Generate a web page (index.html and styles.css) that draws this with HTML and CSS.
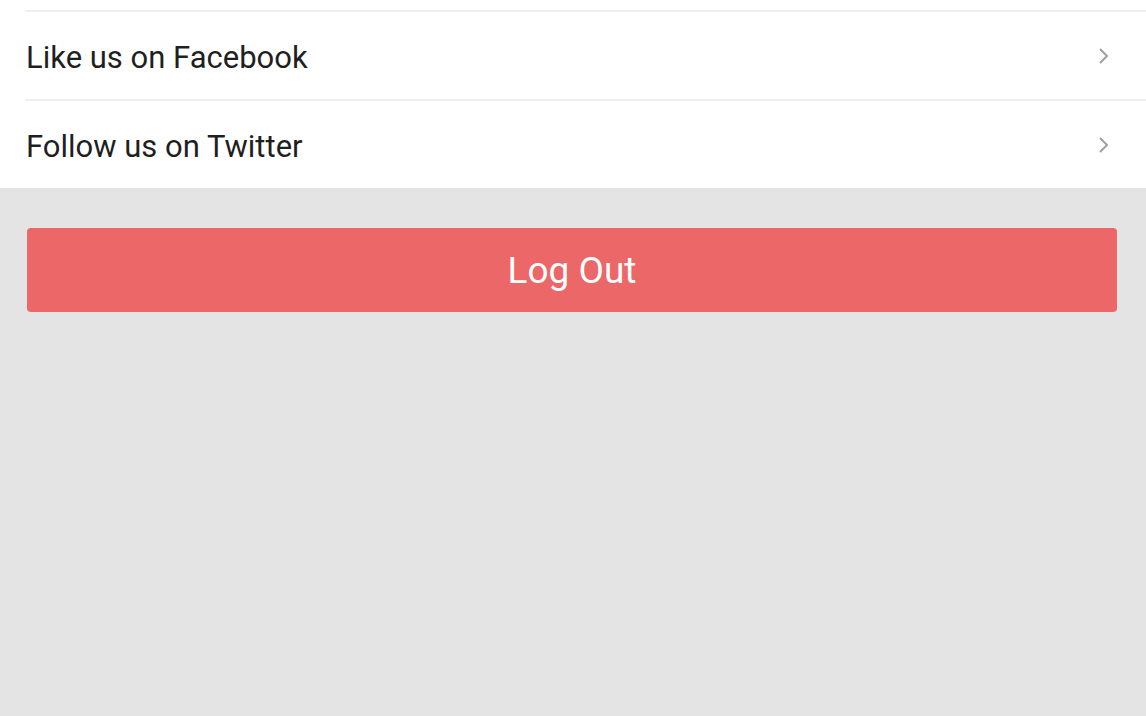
FILE: index.html
```html
<!doctype html>
<html lang="en">
<head>
    <meta charset="utf-8">
    <title>Settings</title>
    <link rel="stylesheet" href="styles.css">
</head>
<body>
    <div class="menu">
        <div class="menu-stub"></div>
        <a class="menu-row" href="#">
            <span class="menu-label">Like us on Facebook</span>
            <svg class="chevron" width="12" height="18" viewBox="0 0 12 18"><path d="M2 2l7 7-7 7" fill="none" stroke="#a0a0a0" stroke-width="2"/></svg>
        </a>
        <a class="menu-row" href="#">
            <span class="menu-label">Follow us on Twitter</span>
            <svg class="chevron" width="12" height="18" viewBox="0 0 12 18"><path d="M2 2l7 7-7 7" fill="none" stroke="#a0a0a0" stroke-width="2"/></svg>
        </a>
    </div>

    <div class="actions">
        <button type="button" class="btn-logout">Log Out</button>
    </div>
</body>
</html>
```

FILE: styles.css
```css
html, body {
    height: 100%;
}

body {
    margin: 0;
    background: #e4e4e4;
    font-family: Roboto, "Noto Sans", sans-serif;
    color: #222;
}

.menu {
    background: #fff;
}

.menu-stub {
    height: 10px;
}

.menu-row {
    display: flex;
    align-items: center;
    justify-content: space-between;
    height: 87px;
    margin-left: 25px;
    padding-right: 36px;
    border-top: 2px solid #efefef;
    text-decoration: none;
    color: #1f1f1f;
}

.menu-label {
    font-size: 31px;
    padding-left: 1px;
    padding-top: 3px;
}

.chevron {
    display: block;
}

.actions {
    padding: 40px 29px 0 27px;
}

.btn-logout {
    display: block;
    width: 100%;
    height: 84px;
    border: 0;
    border-radius: 4px;
    background: #ec6767;
    color: #fff;
    font-family: Roboto, "Noto Sans", sans-serif;
    font-size: 37px;
    padding: 0;
    cursor: pointer;
}
```
